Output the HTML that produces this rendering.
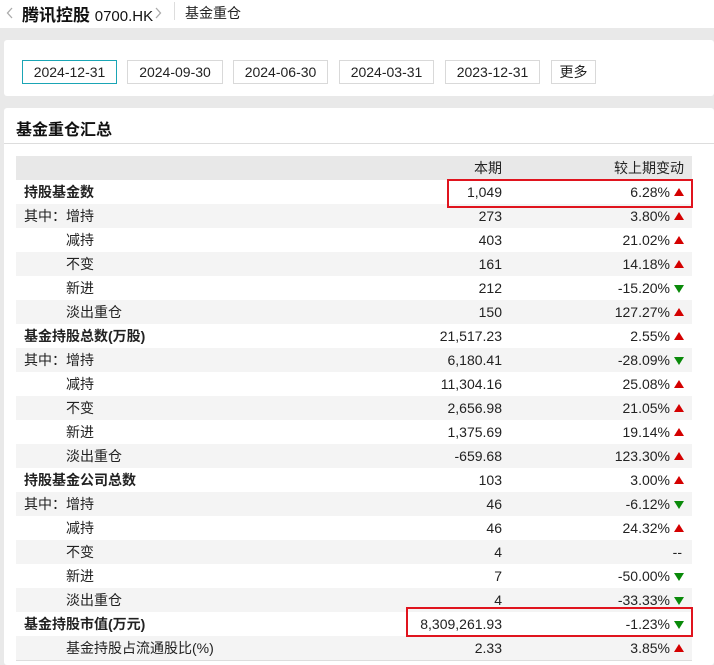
<!DOCTYPE html>
<html><head><meta charset="utf-8"><style>
*{margin:0;padding:0;box-sizing:border-box}
body{width:714px;height:665px;overflow:hidden;background:#e9e9e9;font-family:"Liberation Sans","Noto Sans CJK SC",sans-serif;font-size:14px;color:#222;position:relative}
.top{position:absolute;left:0;top:0;width:714px;height:28px;background:#fff}
.a{position:absolute}
.card1{position:absolute;left:4px;top:40px;width:710px;height:56px;background:#fff;border-radius:3px}
.btn{position:absolute;top:60px;height:24px;border:1px solid #d9d9d9;background:#fff;font-size:14px;line-height:22px;text-align:center;color:#222}
.card2{position:absolute;left:4px;top:108px;width:710px;height:557px;background:#fff;border-radius:3px}
.row{position:absolute;left:16px;width:676px;height:24px;line-height:24px}
.row.g{background:#f4f4f4}
.row span{position:absolute;top:0}
.l{left:8px}.s{left:50px}
.v{right:190px;text-align:right}
.c{right:22px;text-align:right}
.up,.dn{position:absolute;right:8px;top:8px;width:0;height:0;border-left:5.5px solid transparent;border-right:5.5px solid transparent}
.up{border-bottom:8px solid #d40000}
.dn{top:9px;border-top:8px solid #0a8a0a}
b{font-weight:bold}
</style></head><body>
<div class="top"></div>
<svg class="a" style="left:6px;top:7px" width="8" height="12"><path d="M6 1 L1.5 6 L6 11" stroke="#aaa" stroke-width="1.3" fill="none"/></svg>
<div class="a" style="left:22px;top:1px;font-size:17px;color:#111;font-weight:bold;letter-spacing:0">腾讯控股 <span style="font-size:15px;font-weight:normal">0700.HK</span></div>
<svg class="a" style="left:154px;top:7px" width="8" height="12"><path d="M2 1 L6.5 6 L2 11" stroke="#aaa" stroke-width="1.3" fill="none"/></svg>
<div class="a" style="left:174px;top:2px;width:1px;height:18px;background:#ddd"></div>
<div class="a" style="left:185px;top:3px;font-size:14px;color:#222">基金重仓</div>
<div class="card1"></div>
<div class="btn" style="left:22px;width:95px;border-color:#1aa5b5">2024-12-31</div>
<div class="btn" style="left:127px;width:96px">2024-09-30</div>
<div class="btn" style="left:233px;width:95px">2024-06-30</div>
<div class="btn" style="left:339px;width:95px">2024-03-31</div>
<div class="btn" style="left:445px;width:95px">2023-12-31</div>
<div class="btn" style="left:551px;width:45px">更多</div>
<div class="card2"></div>
<div class="a" style="left:16px;top:116px;font-size:16px;font-weight:bold;color:#111">基金重仓汇总</div>
<div class="a" style="left:4px;top:143px;width:710px;height:1px;background:#ddd"></div>
<div class="row" style="top:156px;background:#e8e8e8"><span class="v">本期</span><span class="c" style="right:8px">较上期变动</span></div>
<div id="rows"></div>
<div class="a" style="left:16px;top:660px;width:676px;height:1px;background:#ddd"></div>
<div class="a" style="left:447px;top:179px;width:246px;height:29px;border:2px solid #e0141e"></div>
<div class="a" style="left:406px;top:607px;width:287px;height:30px;border:2px solid #e0141e"></div>
<script>
var d=[["b","持股基金数","1,049","6.28%",1],["i","其中：增持","273","3.80%",1],["s","减持","403","21.02%",1],["s","不变","161","14.18%",1],["s","新进","212","-15.20%",0],["s","淡出重仓","150","127.27%",1],
["b","基金持股总数(万股)","21,517.23","2.55%",1],["i","其中：增持","6,180.41","-28.09%",0],["s","减持","11,304.16","25.08%",1],["s","不变","2,656.98","21.05%",1],["s","新进","1,375.69","19.14%",1],["s","淡出重仓","-659.68","123.30%",1],
["b","持股基金公司总数","103","3.00%",1],["i","其中：增持","46","-6.12%",0],["s","减持","46","24.32%",1],["s","不变","4","--",2],["s","新进","7","-50.00%",0],["s","淡出重仓","4","-33.33%",0],
["b","基金持股市值(万元)","8,309,261.93","-1.23%",0],["s","基金持股占流通股比(%)","2.33","3.85%",1]];
var h="";d.forEach(function(r,i){var lab=r[0]=="b"?'<span class="l"><b>'+r[1]+'</b></span>':r[0]=="i"?'<span class="l">'+r[1]+'</span>':'<span class="s">'+r[1]+'</span>';
var ar=r[4]==1?'<i class="up"></i>':r[4]==0?'<i class="dn"></i>':'';
var cs=r[4]==2?' style="right:10px"':'';
h+='<div class="row'+(i%2?' g':'')+'" style="top:'+(180+i*24)+'px">'+lab+'<span class="v">'+r[2]+'</span><span class="c"'+cs+'>'+r[3]+'</span>'+ar+'</div>';});
document.getElementById("rows").innerHTML=h;
</script>
</body></html>
